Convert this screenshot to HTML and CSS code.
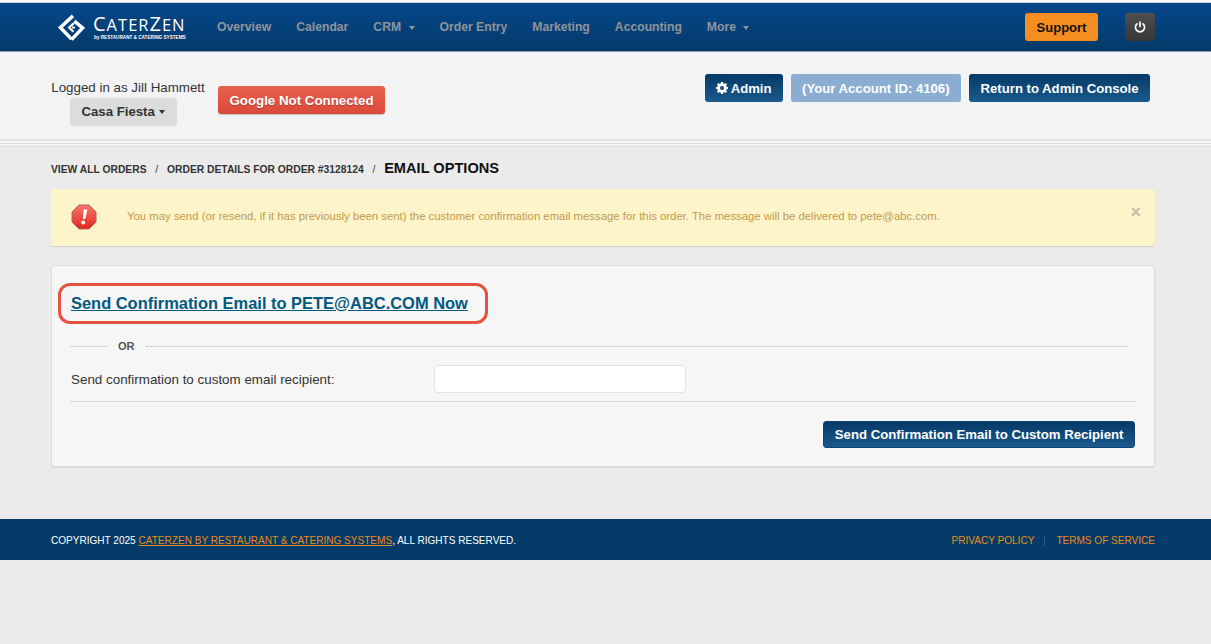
FILE: index.html
```html
<!DOCTYPE html>
<html lang="en">
<head>
<meta charset="utf-8">
<title>Email Options</title>
<link rel="stylesheet" href="styles.css">
</head>
<body>
<header class="navbar">
  <a class="logo" href="#">
    <svg class="logo-mark" width="29" height="29" viewBox="0 0 30 30" fill="none" stroke="#fff" stroke-width="3.600">
      <path d="M16.500 3 L3.500 15 L15 27"/>
      <path d="M18 8.500 L26.500 15.500 L15 27.500"/>
      <path d="M17.500 10.500 L12.500 15 L17 19.500" stroke-width="2.200"/>
      <path d="M15.500 15 H18.500" stroke-width="2"/>
    </svg>
    <span class="logo-text">
      <span class="logo-name">C<small>ATER</small>Z<small>EN</small></span>
      <span class="logo-sub">by RESTAURANT &amp; CATERING SYSTEMS</span>
    </span>
  </a>
  <nav class="nav-links">
    <a href="#">Overview</a>
    <a href="#">Calendar</a>
    <a href="#">CRM <i class="caret"></i></a>
    <a href="#">Order Entry</a>
    <a href="#">Marketing</a>
    <a href="#">Accounting</a>
    <a href="#">More <i class="caret"></i></a>
  </nav>
  <a class="btn-support" href="#">Support</a>
  <a class="btn-power" href="#" aria-label="Log out">
    <svg width="12" height="12" viewBox="0 0 12 12" fill="none" stroke="#fff" stroke-width="1.700" stroke-linecap="round">
      <path d="M6 1 V5.500"/>
      <path d="M3 2.800 A4.600 4.600 0 1 0 9 2.800"/>
    </svg>
  </a>
</header>

<section class="subheader">
  <div class="account">
    <div class="logged">Logged in as Jill Hammett</div>
    <button class="btn-location" type="button">Casa Fiesta <i class="caret dark"></i></button>
  </div>
  <a class="btn-google" href="#">Google Not Connected</a>
  <div class="admin-actions">
    <a class="btn-navy btn-admin" href="#">
      <svg class="gear" width="12" height="12" viewBox="0 0 12 12"><path fill="#fff" fill-rule="evenodd" d="M5 0h2l.3 1.500 1 .4L9.600 1 11 2.400l-.9 1.300.4 1 1.500.3v2l-1.500.3-.4 1 .9 1.300L9.600 11l-1.300-.9-1 .4L7 12H5l-.3-1.500-1-.4-1.300.9L1 9.600l.9-1.300-.4-1L0 7V5l1.500-.3.4-1L1 2.400 2.400 1l1.300.9 1-.4zM6 4a2 2 0 1 0 0 4 2 2 0 0 0 0-4z"/></svg>
      Admin
    </a>
    <span class="btn-light">(Your Account ID: 4106)</span>
    <a class="btn-navy" href="#">Return to Admin Console</a>
  </div>
</section>

<main class="content">
  <div class="breadcrumb">
    <a href="#">VIEW ALL ORDERS</a><span class="sep">/</span><a href="#">ORDER DETAILS FOR ORDER #3128124</a><span class="sep">/</span><strong>EMAIL OPTIONS</strong>
  </div>

  <div class="alert">
    <svg class="alert-icon" width="26" height="26" viewBox="0 0 26 26">
      <defs>
        <linearGradient id="stop" x1="0" y1="0" x2="0" y2="1">
          <stop offset="0" stop-color="#f7796c"/>
          <stop offset="1" stop-color="#e0271f"/>
        </linearGradient>
      </defs>
      <polygon points="8,1 18,1 25,8 25,18 18,25 8,25 1,18 1,8" fill="url(#stop)" stroke="#b9605a" stroke-width="1"/>
      <path d="M12.500 5.500 H16.500 L14.200 15 H12 Z" fill="#fff"/>
      <circle cx="12.200" cy="18.500" r="1.900" fill="#fff"/>
    </svg>
    <p class="alert-text">You may send (or resend, if it has previously been sent) the customer confirmation email message for this order. The message will be delivered to pete@abc.com.</p>
    <span class="alert-close">&times;</span>
  </div>

  <div class="panel">
    <div class="send-row">
      <a class="send-link" href="#">Send Confirmation Email to PETE@ABC.COM Now</a>
      <span class="highlight"></span>
    </div>
    <div class="or-row">
      <span class="or-line short"></span>
      <span class="or-text">OR</span>
      <span class="or-line"></span>
    </div>
    <div class="field-row">
      <label class="field-label" for="custom">Send confirmation to custom email recipient:</label>
      <input class="field-input" id="custom" type="text">
    </div>
    <div class="actions">
      <a class="btn-navy btn-send" href="#">Send Confirmation Email to Custom Recipient</a>
    </div>
  </div>
</main>

<footer class="footer">
  <div class="copyright">COPYRIGHT 2025 <a href="#">CATERZEN BY RESTAURANT &amp; CATERING SYSTEMS</a>, ALL RIGHTS RESERVED.</div>
  <div class="legal">
    <a class="legal-first" href="#">PRIVACY POLICY</a>
    <a href="#">TERMS OF SERVICE</a>
  </div>
</footer>
</body>
</html>
```
FILE: styles.css
```css
* { box-sizing: border-box; }
html, body { margin: 0; padding: 0; }
body {
  background: #ebebeb;
  font-family: "Liberation Sans", Arial, sans-serif;
  font-size: 13px;
  color: #333;
  padding-top: 3px;
  height: 644px;
  overflow: hidden;
  background-image: linear-gradient(#fff 0, #fff 2px, #d4d4d4 2px, #d4d4d4 3px, transparent 3px);
}
a { text-decoration: none; color: inherit; }

.navbar {
  height: 49px;
  display: flex;
  align-items: center;
  padding-left: 56px;
  background: linear-gradient(#05478c, #043a68);
  border-bottom: 1px solid #8d9aa6;
}
.logo { display: flex; align-items: center; width: 161px; color: #fff; }
.logo-mark { margin: 1px 8px 0 1px; flex: none; }
.logo-text { display: flex; flex-direction: column; line-height: 1; padding-top: 1px; }
.logo-name { font-family: "Open Sans", sans-serif; font-size: 20px; line-height: 18px; letter-spacing: 1px; margin-left: -1px; white-space: nowrap; }
.logo-name small { font-size: 16.500px; }
.logo-sub { font-size: 4.650px; font-weight: 700; white-space: nowrap; margin-top: 1px; line-height: 6px; }

.nav-links { display: flex; gap: 25px; font-size: 12.200px; font-weight: 700; color: #8f949b; }
.caret {
  display: inline-block;
  width: 0; height: 0;
  margin-left: 4px;
  vertical-align: middle;
  border-top: 4px solid #8f949b;
  border-left: 3.500px solid transparent;
  border-right: 3.500px solid transparent;
}
.caret.dark { border-top-color: #333; border-left-width: 3.500px; border-right-width: 3.500px; margin-left: 1px; }

.btn-support {
  margin-left: auto;
  width: 73px; height: 28px;
  display: flex; align-items: center; justify-content: center;
  background: #f58d20;
  border-radius: 3px;
  color: #111;
  font-size: 13px;
  font-weight: 700;
}
.btn-power {
  margin-left: 27px;
  margin-right: 56px;
  width: 30px; height: 28px;
  display: flex; align-items: center; justify-content: center;
  background: linear-gradient(#4f4f4f, #373737);
  border-radius: 3px;
}

.subheader {
  height: 96px;
  padding: 22px 61px 0 51px;
  display: flex;
  align-items: flex-start;
  background-image: linear-gradient(to top,
    #ebebeb 0, #ebebeb 1px,
    #dcdcdc 1px, #dcdcdc 2px,
    #f4f4f4 2px, #f4f4f4 4px,
    #dedede 4px, #dedede 5px,
    #f6f6f6 5px, #f6f6f6 7px,
    #dfdfdf 7px, #dfdfdf 9px,
    #f2f3f4 9px);
}
.account { display: flex; flex-direction: column; align-items: center; width: 154px; margin-top: 6px; }
.logged { font-size: 13.350px; line-height: 16px; white-space: nowrap; margin-bottom: 2px; }
.btn-location {
  width: 107px; height: 28px;
  margin-right: 9px;
  border: 0; border-radius: 3px;
  background: #dcdcdc;
  font: 700 13.200px "Liberation Sans", Arial, sans-serif;
  color: #333;
  padding: 0 0 2px;
}
.btn-google {
  margin-left: 13px;
  margin-top: 12px;
  width: 167px; height: 28px;
  display: flex; align-items: center; justify-content: center;
  background: linear-gradient(#e8604e, #db4a3a);
  border-radius: 3px;
  color: #fff;
  font-size: 13.300px;
  font-weight: 700;
  box-shadow: 0 1px 1px rgba(0, 0, 0, .2);
  text-shadow: 0 1px 1px rgba(0, 0, 0, .25);
}
.admin-actions { margin-left: auto; display: flex; gap: 8px; }
.btn-navy, .btn-light {
  height: 28px;
  padding: 0 11.500px;
  display: inline-flex; align-items: center; gap: 3px;
  border-radius: 3px;
  color: #fff;
  font-size: 13.150px;
  font-weight: 700;
  white-space: nowrap;
}
.btn-navy { background: linear-gradient(#053a68, #1a5a8c); }
.btn-light { background: #8badd2; }
.btn-admin { padding: 0 11px; }

.content { padding: 12px 56px 52px 51px; }
.breadcrumb { height: 18px; display: flex; align-items: baseline; font-size: 10.300px; font-weight: 700; color: #333; }
.breadcrumb .sep { margin: 0 8.800px; font-weight: 400; }
.breadcrumb strong { font-size: 14.600px; color: #111; }

.alert {
  margin-top: 11px;
  height: 57px;
  display: flex;
  padding-left: 20px;
  background: #fdf5c9;
  border-radius: 3px;
  box-shadow: 0 1px 1px rgba(0, 0, 0, .12);
  position: relative;
}
.alert-icon { margin-top: 15px; flex: none; }
.alert-text { margin: 20px 0 0 30px; font-size: 11.350px; line-height: 14px; color: #c19a4e; }
.alert-close { position: absolute; right: 14px; top: 13px; font-size: 18px; line-height: 20px; font-weight: 700; color: #c2c0a8; }

.panel {
  margin-top: 19px;
  height: 202px;
  padding: 0 19px;
  background: #f6f6f6;
  border: 1px solid #dcdcdc;
  border-radius: 3px;
  box-shadow: 0 1px 1px rgba(0, 0, 0, .08);
}
.send-row { position: relative; height: 72px; padding-top: 27px; }
.send-link { font-size: 16.450px; line-height: 20px; font-weight: 700; color: #03597f; text-decoration: underline; }
.highlight {
  position: absolute;
  left: -13px; top: 17px;
  width: 430px; height: 41px;
  border: 3.500px solid #e5523f;
  border-radius: 12px;
  pointer-events: none;
}
.or-row { display: flex; align-items: center; height: 16px; margin-right: 7px; }
.or-line { flex: 1; border-top: 1px dotted #bcbcbc; }
.or-line.short { flex: none; width: 36px; }
.or-text { margin: 0 11px; font-size: 11px; font-weight: 700; color: #555; }
.field-row { display: flex; align-items: center; height: 47px; padding-top: 2px; margin-top: 1px; border-bottom: 1px dotted #bcbcbc; }
.field-label { width: 363px; font-size: 13.400px; white-space: nowrap; color: #333; }
.field-input { width: 252px; height: 28px; border: 1px solid #e2e2e2; border-radius: 4px; background: #fff; }
.actions { display: flex; justify-content: flex-end; margin-top: 19px; }
.btn-send { height: 27px; border: 1px solid #0b4472; padding: 0 10.500px; font-size: 13.200px; }

.footer {
  height: 41px;
  padding: 1px 56px 0 51px;
  display: flex;
  justify-content: space-between;
  align-items: center;
  background: #053b69;
  font-size: 10.050px;
  color: #fff;
}
.footer a { color: #ea8a18; }
.copyright a { text-decoration: underline; }
.legal { display: flex; }
.legal-first { padding-right: 10px; margin-right: 11px; border-right: 1px solid #2b5e8b; }
```
